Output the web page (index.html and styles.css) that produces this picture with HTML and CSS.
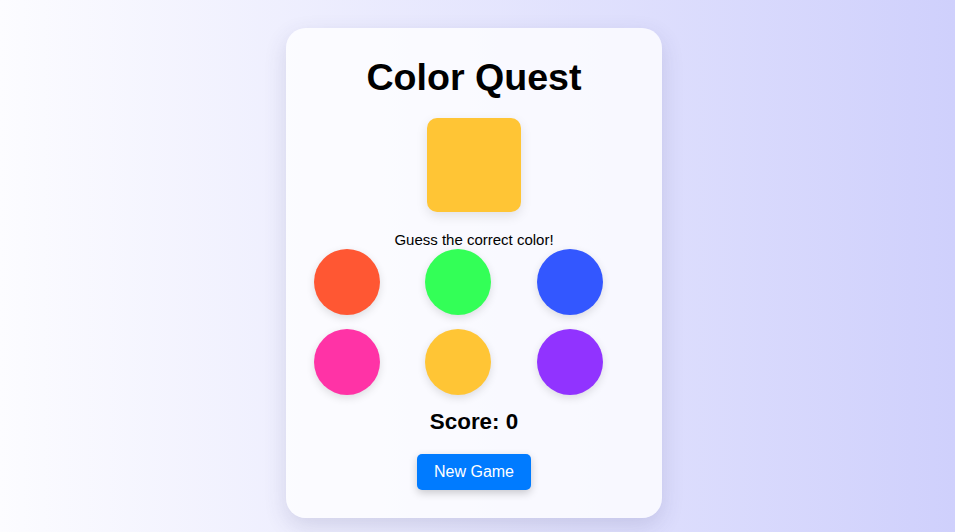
FILE: index.html
```html
<!DOCTYPE html>
<html lang="en">
<head>
<meta charset="utf-8">
<title>Color Quest</title>
<link rel="stylesheet" href="styles.css">
</head>
<body>
  <main class="card">
    <h1 class="title">Color Quest</h1>
    <div class="target"></div>
    <p class="prompt">Guess the correct color!</p>
    <div class="options">
      <button class="swatch red" aria-label="red"></button>
      <button class="swatch green" aria-label="green"></button>
      <button class="swatch blue" aria-label="blue"></button>
      <button class="swatch pink" aria-label="pink"></button>
      <button class="swatch yellow" aria-label="yellow"></button>
      <button class="swatch purple" aria-label="purple"></button>
    </div>
    <div class="score">Score: 0</div>
    <button class="new-game">New Game</button>
  </main>
</body>
</html>
```

FILE: styles.css
```css
* { box-sizing: border-box; }

html, body {
  margin: 0;
  height: 100%;
}

body {
  font-family: "Liberation Sans", Arial, sans-serif;
  color: #000;
  background: linear-gradient(to right, #fcfcff 0%, #cfd0fc 100%);
  display: flex;
  justify-content: center;
  align-items: flex-start;
  padding: 28px 7px 0 0;
}

.card {
  width: 376px;
  padding: 28px;
  border-radius: 20px;
  background: rgba(255, 255, 255, 0.78);
  box-shadow: 0 8px 22px rgba(60, 60, 120, 0.16);
  display: flex;
  flex-direction: column;
  align-items: center;
}

.title {
  margin: 0;
  font-size: 37.6px;
  font-weight: bold;
  line-height: normal;
}

.target {
  width: 94px;
  height: 94px;
  margin-top: 19px;
  border-radius: 10px;
  background: #ffc535;
  box-shadow: 0 4px 12px rgba(0, 0, 0, 0.1);
}

.prompt {
  margin: 19px 0 0;
  font-size: 15px;
  line-height: normal;
}

.options {
  width: 100%;
  display: grid;
  grid-template-columns: repeat(3, 1fr);
  gap: 14px;
  margin-top: 1px;
}

.swatch {
  width: 66px;
  height: 66px;
  border: none;
  padding: 0;
  border-radius: 50%;
  box-shadow: 0 3px 8px rgba(0, 0, 0, 0.12);
  cursor: pointer;
}

.red { background: #ff5733; }
.green { background: #33ff57; }
.blue { background: #3357ff; }
.pink { background: #ff33a6; }
.yellow { background: #ffc535; }
.purple { background: #9133ff; }

.score {
  margin-top: 14px;
  font-size: 22.4px;
  font-weight: bold;
  line-height: normal;
}

.new-game {
  margin-top: 19px;
  height: 36px;
  padding: 0 16.5px;
  border: none;
  border-radius: 5px;
  background: #007bff;
  color: #fff;
  font-family: "Liberation Sans", Arial, sans-serif;
  font-size: 16px;
  box-shadow: 0 3px 8px rgba(0, 0, 0, 0.2);
  cursor: pointer;
}
```
